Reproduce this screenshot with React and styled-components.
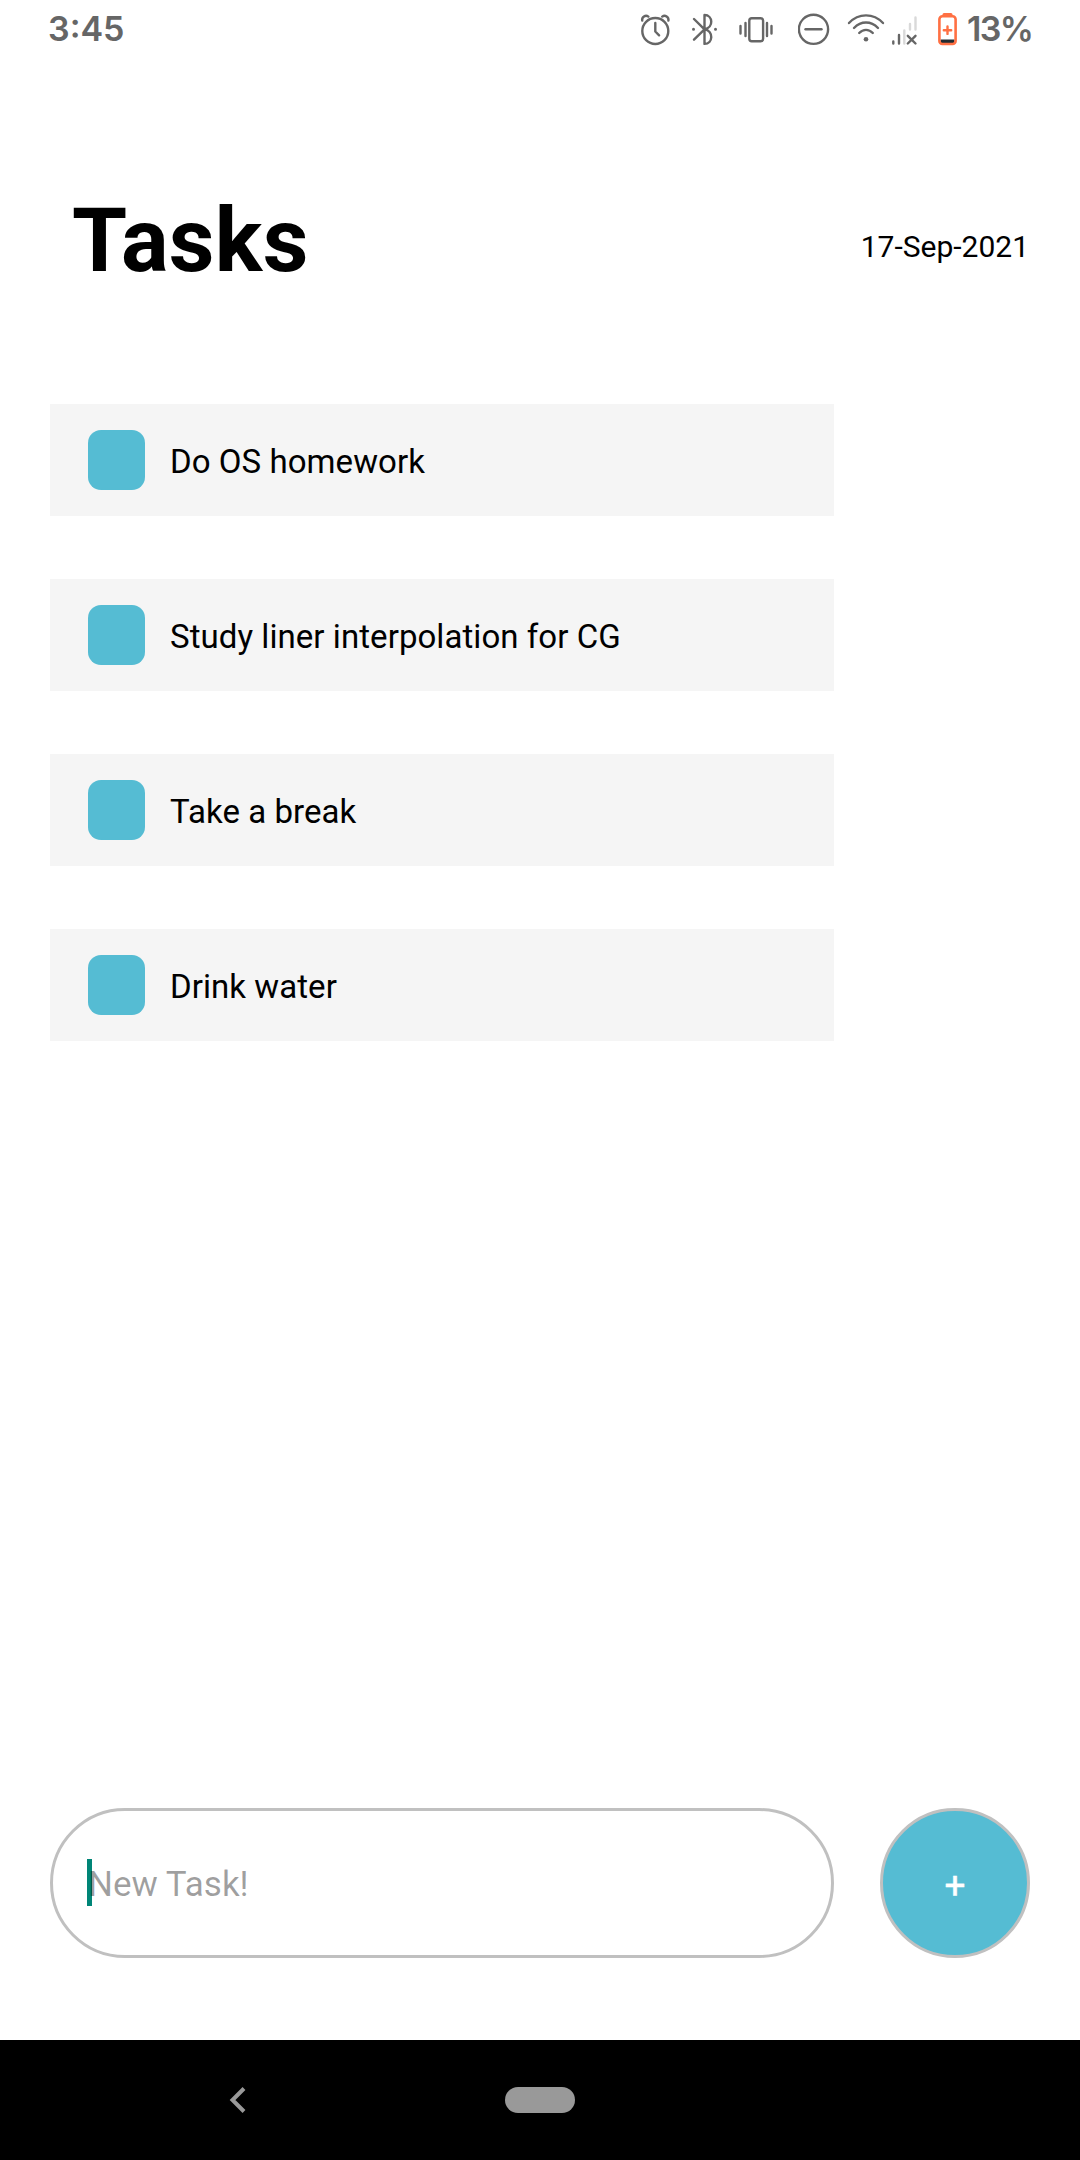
import React from 'react';
import styled, { createGlobalStyle } from 'styled-components';

const GlobalStyle = createGlobalStyle`
  *, *::before, *::after { box-sizing: border-box; }
  body { margin: 0; background: #fff; }
`;

const Screen = styled.div`
  width: 1080px;
  height: 2160px;
  display: flex;
  flex-direction: column;
  background: #fff;
  color: #000;
  font-family: Roboto, sans-serif;
  overflow: hidden;
`;

const StatusBar = styled.header`
  height: 60px;
  flex: none;
  display: flex;
  justify-content: space-between;
  padding: 0 47px 0 48px;
  color: #666;
`;

const StatusText = styled.span`
  font-family: Inter, Roboto, sans-serif;
  font-size: 34px;
  font-weight: 600;
  line-height: 57px;
  letter-spacing: ${(p) => p.$spacing || '0'};
  white-space: nowrap;
`;

const Percent = styled(StatusText)`
  width: 66px;
`;

const StatusIcons = styled.div`
  display: flex;
`;

const Glyph = styled.svg`
  display: block;
  flex: none;
  height: 60px;
  margin-right: ${(p) => p.$after}px;
  fill: none;
  stroke: #666;
  stroke-width: 2.4;
  stroke-linecap: round;
  stroke-linejoin: round;
`;

const Header = styled.section`
  height: 344px;
  flex: none;
  display: flex;
  align-items: center;
  justify-content: space-between;
  padding: 18px 51px 0 72px;
`;

const Title = styled.h1`
  margin: 0;
  font-size: 89px;
  font-weight: 700;
  line-height: 104px;
  letter-spacing: 0.3px;
`;

const DateLabel = styled.time`
  margin-top: 11px;
  font-size: 30px;
  line-height: 36px;
`;

const TaskList = styled.ul`
  list-style: none;
  margin: 0;
  padding: 0 0 0 50px;
  flex: 1;
  display: flex;
  flex-direction: column;
  gap: 63px;
`;

const TaskRow = styled.li`
  width: 784px;
  height: 112px;
  display: flex;
  align-items: center;
  gap: 25px;
  padding-left: 38px;
  background: #f5f5f5;
`;

const CheckBox = styled.span`
  width: 57px;
  height: 60px;
  border-radius: 13px;
  background: #55bcd3;
`;

const TaskText = styled.span`
  padding-top: 3px;
  font-size: 33px;
  line-height: 40px;
  letter-spacing: 0.06px;
`;

const Composer = styled.form`
  height: 232px;
  flex: none;
  display: flex;
  justify-content: space-between;
  align-items: flex-start;
  padding: 0 50px;
`;

const Field = styled.label`
  width: 784px;
  height: 150px;
  display: flex;
  align-items: center;
  padding-left: 34px;
  border: 3px solid #c0c0c0;
  border-radius: 75px;
`;

const Caret = styled.span`
  width: 5px;
  height: 47px;
  margin-right: -4px;
  margin-bottom: 1px;
  background: #008577;
`;

const Placeholder = styled.span`
  padding-top: 4px;
  font-size: 35px;
  line-height: 42px;
  color: rgba(0, 0, 0, 0.38);
`;

const AddButton = styled.button`
  width: 150px;
  height: 150px;
  padding: 6px 0 0;
  border: 3px solid #c0c0c0;
  border-radius: 50%;
  background: #55bcd3;
  color: #fff;
  font-family: Roboto, sans-serif;
  font-size: 37px;
  line-height: 42px;
  -webkit-text-stroke: 0.4px #fff;
`;

const NavBar = styled.nav`
  height: 120px;
  flex: none;
  display: flex;
  align-items: center;
  padding-left: 228px;
  background: #000;
`;

const BackIcon = styled.svg`
  display: block;
  width: 20px;
  height: 30px;
  margin-right: 257px;
  fill: none;
  stroke: #999;
  stroke-width: 4;
`;

const HomePill = styled.span`
  width: 70px;
  height: 26px;
  border-radius: 13px;
  background: #999;
`;

const tasks = ['Do OS homework', 'Study liner interpolation for CG', 'Take a break', 'Drink water'];

function AlarmIcon() {
  return (
    <Glyph width="32" viewBox="640 0 32 60" $after={18}>
      <circle cx="655.3" cy="31" r="13" />
      <path d="M655.3 23v8.5l3.8 3.8M642.2 20.6c-.6-3.500 3.200-6.200 6.200-4M668.400 20.600c.6-3.500-3.200-6.200-6.200-4" />
    </Glyph>
  );
}

function BluetoothIcon() {
  return (
    <Glyph width="28" viewBox="690 0 28 60" $after={20}>
      <path d="M694 19l10.500 10.300L694 39.700M704.500 29.300V15c8.500 0 9.500 12.500 0 14.300c9.500 1.800 8.500 14.600 0 14.600z" />
      <path d="M693.500 29.300h.01M715.500 29.300h.01" strokeWidth="3" />
    </Glyph>
  );
}

function VibrateIcon() {
  return (
    <Glyph width="36" viewBox="738 0 36 60" $after={24}>
      <rect x="749.300" y="18.300" width="13.800" height="23" rx="2.500" />
      <path d="M745.500 23v13M740.500 26v7.500M767 23v13M771.500 26v7.500" />
    </Glyph>
  );
}

function DoNotDisturbIcon() {
  return (
    <Glyph width="32" viewBox="798 0 32 60" $after={16}>
      <circle cx="813.500" cy="29.300" r="14.600" />
      <path d="M805.500 29.300h16" />
    </Glyph>
  );
}

function WifiIcon() {
  return (
    <Glyph width="39" viewBox="846 0 39 60" $after={6}>
      <path d="M849 23.000c9.500-10.200 24.500-10.200 34 0M854 28c7-7.300 17-7.300 24 0M859.200 33c4-4.200 9.600-4.200 13.600 0" />
      <circle cx="866" cy="39.300" r="2.300" fill="#666" stroke="none" />
    </Glyph>
  );
}

function SignalIcon() {
  return (
    <Glyph width="27" viewBox="891 0 27 60" $after={19}>
      <path d="M893.300 41.500v2M899 35v8.500" />
      <path d="M904.300 30.500v13M910 24v5.500M915.500 17.500v12" stroke="#d9d9d9" />
      <path d="M907.800 35.800l7.700 7.700M915.500 35.800l-7.700 7.700" />
    </Glyph>
  );
}

function BatteryIcon() {
  return (
    <Glyph width="21" viewBox="937 0 21 60" $after={9}>
      <path d="M944 14.500h7" stroke="#ff7043" strokeWidth="3" />
      <path d="M940.500 39.500h14v3.500h-14z" fill="#222b30" stroke="none" />
      <rect x="939.400" y="16.200" width="16.200" height="27.800" rx="3" stroke="#ff7043" strokeWidth="2.600" />
      <path d="M947.500 26.500v7.400M943.800 30.200h7.400" stroke="#ff7043" strokeWidth="2.400" />
    </Glyph>
  );
}

export default function App() {
  return (
    <Screen>
      <GlobalStyle />
      <StatusBar>
        <StatusText>3:45</StatusText>
        <StatusIcons>
          <AlarmIcon />
          <BluetoothIcon />
          <VibrateIcon />
          <DoNotDisturbIcon />
          <WifiIcon />
          <SignalIcon />
          <BatteryIcon />
          <Percent $spacing="-1.6px">13%</Percent>
        </StatusIcons>
      </StatusBar>
      <Header>
        <Title>Tasks</Title>
        <DateLabel>17-Sep-2021</DateLabel>
      </Header>
      <TaskList>
        {tasks.map((task) => (
          <TaskRow key={task}>
            <CheckBox />
            <TaskText>{task}</TaskText>
          </TaskRow>
        ))}
      </TaskList>
      <Composer>
        <Field>
          <Caret />
          <Placeholder>New Task!</Placeholder>
        </Field>
        <AddButton type="button">+</AddButton>
      </Composer>
      <NavBar>
        <BackIcon viewBox="0 0 20 30">
          <path d="M16 3.500L4.500 15L16 26.500" />
        </BackIcon>
        <HomePill />
      </NavBar>
    </Screen>
  );
}
